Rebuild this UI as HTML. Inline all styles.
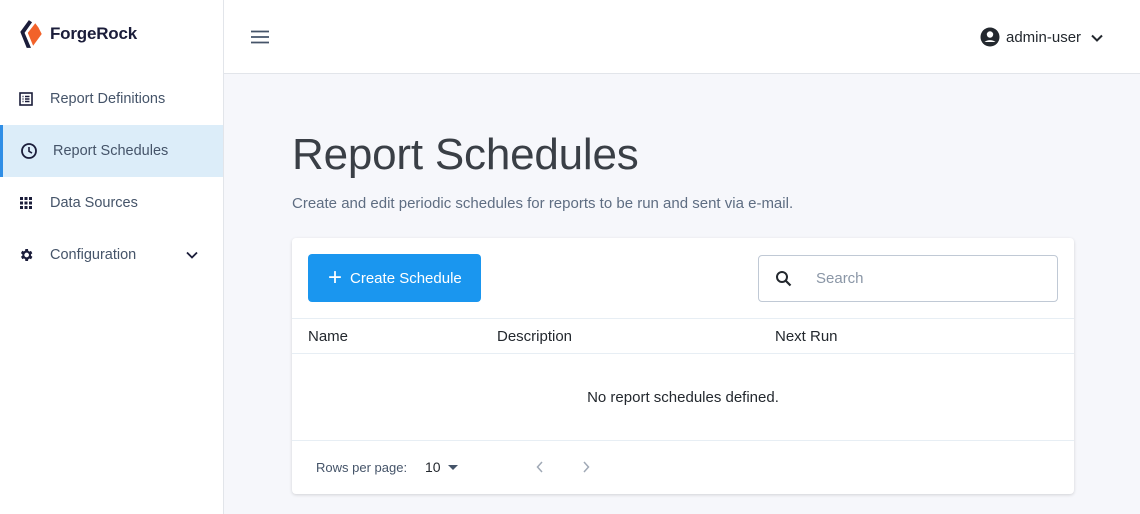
<!DOCTYPE html>
<html><head><meta charset="utf-8"><style>
*{box-sizing:border-box;margin:0;padding:0}
body{width:1140px;height:514px;overflow:hidden;font-family:"Liberation Sans",sans-serif;background:#f6f7fb;position:relative;color:#23282e}
.side{position:absolute;left:0;top:0;width:224px;height:514px;background:#fff;border-right:1px solid #e2e5ea}
.logo{position:absolute;left:18px;top:19px;display:flex;align-items:center}
.logo span{font-weight:bold;font-size:17px;color:#1b1d3a;margin-left:6px;letter-spacing:-0.2px}
.nav{position:absolute;left:0;width:223px;height:52px;display:flex;align-items:center;font-size:14.5px;color:#455469}
.nav svg{position:absolute;left:19px}
.nav .t{position:absolute;left:50px;top:18px}
.active{background:#dcedf9;border-left:3px solid #2f8ee6}
.header{position:absolute;left:224px;top:0;right:0;height:74px;background:#fff;border-bottom:1px solid #e2e5ea}
h1{position:absolute;left:292px;top:130px;font-weight:normal;font-size:44px;color:#3a3f46;letter-spacing:-0.2px}
.sub{position:absolute;left:292px;top:195px;font-size:15px;color:#5e6d82}
.card{position:absolute;left:292px;top:238px;width:782px;height:256px;background:#fff;border-radius:4px;box-shadow:0 1px 3px rgba(0,0,0,.15)}
.btn{position:absolute;left:16px;top:16px;width:173px;height:48px;background:#1a96ef;border-radius:4px;color:#fff;font-size:15px;display:flex;align-items:center;padding-left:20px}
.search{position:absolute;left:466px;top:17px;width:300px;height:47px;border:1px solid #c0c9d5;border-radius:4px;font-size:15px;color:#8a96a6}
.line{position:absolute;left:0;right:0;height:1px;background:#e7eef4}
.th{position:absolute;top:90px;font-size:15px;color:#23282e}
</style></head><body>
<div class="side">
 <div class="logo">
  <svg width="26" height="30" viewBox="0 0 24 28"><path d="M10 1 L2 12 L8 27 L12 27 L6 13 L13 3Z" fill="#1b1d3a"/><path d="M16 4 L9 13 L14 25 L22 14 L19 8Z" fill="#f2622a"/></svg>
  <span>ForgeRock</span>
 </div>
 <div class="nav" style="top:73px"><svg width="14" height="14" viewBox="0 0 14 14"><rect x="1" y="1" width="12" height="12" fill="none" stroke="#1b1d3a" stroke-width="1.6"/><path d="M3.5 4.5h1M6 4.5h4.5M3.5 7h1M6 7h4.5M3.5 9.5h1M6 9.5h4.5" stroke="#1b1d3a" stroke-width="1.4"/></svg><span class="t">Report Definitions</span></div>
 <div class="nav active" style="top:125px"><svg width="18" height="18" viewBox="0 0 18 18" style="left:17px"><circle cx="9" cy="9" r="7" fill="none" stroke="#1b1d3a" stroke-width="1.8"/><path d="M9 5v4.3l3 1.8" fill="none" stroke="#1b1d3a" stroke-width="1.6"/></svg><span class="t">Report Schedules</span></div>
 <div class="nav" style="top:177px"><svg width="14" height="14" viewBox="0 0 14 14" fill="#1b1d3a"><rect x="1" y="1" width="3" height="3"/><rect x="5.5" y="1" width="3" height="3"/><rect x="10" y="1" width="3" height="3"/><rect x="1" y="5.5" width="3" height="3"/><rect x="5.5" y="5.5" width="3" height="3"/><rect x="10" y="5.5" width="3" height="3"/><rect x="1" y="10" width="3" height="3"/><rect x="5.5" y="10" width="3" height="3"/><rect x="10" y="10" width="3" height="3"/></svg><span class="t">Data Sources</span></div>
 <div class="nav" style="top:229px"><svg width="16" height="16" viewBox="0 0 24 24" style="left:18px"><path fill="#1b1d3a" d="M19.4 13a7.5 7.5 0 000-2l2.1-1.6-2-3.5-2.5 1a7.3 7.3 0 00-1.7-1L15 3h-4l-.4 2.7a7.3 7.3 0 00-1.7 1l-2.5-1-2 3.5L6.6 11a7.5 7.5 0 000 2l-2.1 1.6 2 3.5 2.5-1a7.3 7.3 0 001.7 1L11 21h4l.4-2.7a7.3 7.3 0 001.7-1l2.5 1 2-3.5zM13 15.5A3.5 3.5 0 1113 8.5a3.5 3.5 0 010 7z"/></svg><span class="t">Configuration</span><svg width="12" height="8" viewBox="0 0 12 8" style="left:186px"><path d="M1 1.5l5 5 5-5" fill="none" stroke="#1b1d3a" stroke-width="1.8"/></svg></div>
</div>
<div class="header">
 <svg width="20" height="14" viewBox="0 0 20 14" style="position:absolute;left:26px;top:30px"><path d="M1 1.5h18M1 7h18M1 12.5h18" stroke="#455469" stroke-width="1.8"/></svg>
 <svg width="20" height="20" viewBox="0 0 20 20" style="position:absolute;left:756px;top:27px"><circle cx="10" cy="10" r="9.5" fill="#23282e"/><circle cx="10" cy="7.5" r="3.2" fill="#fff"/><path d="M4.5 15a7 5 0 0111 0" fill="#fff"/></svg>
 <span style="position:absolute;left:782px;top:29px;font-size:15px;color:#23282e">admin-user</span>
 <svg width="12" height="8" viewBox="0 0 12 8" style="position:absolute;left:867px;top:34px"><path d="M1 1.5l5 5 5-5" fill="none" stroke="#23282e" stroke-width="2"/></svg>
</div>
<h1>Report Schedules</h1>
<div class="sub">Create and edit periodic schedules for reports to be run and sent via e-mail.</div>
<div class="card">
 <div class="btn"><span style="font-size:24px;font-weight:300;margin-right:8px;line-height:1">+</span>Create Schedule</div>
 <div class="search"><svg width="18" height="18" viewBox="0 0 18 18" style="position:absolute;left:16px;top:14px"><circle cx="7" cy="7" r="5" fill="none" stroke="#23282e" stroke-width="2"/><path d="M10.5 10.5l5 5" stroke="#23282e" stroke-width="2.2"/></svg><span style="position:absolute;left:57px;top:14px">Search</span></div>
 <div class="line" style="top:80px"></div>
 <div class="th" style="left:16px">Name</div>
 <div class="th" style="left:205px">Description</div>
 <div class="th" style="left:483px">Next Run</div>
 <div class="line" style="top:115px"></div>
 <div style="position:absolute;left:0;right:0;top:151px;text-align:center;font-size:15px;color:#23282e">No report schedules defined.</div>
 <div class="line" style="top:202px"></div>
 <div style="position:absolute;left:24px;top:222px;font-size:13px;color:#455469">Rows per page:</div>
 <div style="position:absolute;left:133px;top:221px;font-size:14px;color:#23282e">10</div>
 <svg width="10" height="6" viewBox="0 0 10 6" style="position:absolute;left:156px;top:227px"><path d="M0 0h10L5 5z" fill="#455469"/></svg>
 <svg width="8" height="12" viewBox="0 0 8 12" style="position:absolute;left:244px;top:223px"><path d="M6 1L1.5 6 6 11" fill="none" stroke="#a0a9b6" stroke-width="1.5"/></svg>
 <svg width="8" height="12" viewBox="0 0 8 12" style="position:absolute;left:290px;top:223px"><path d="M2 1l4.5 5L2 11" fill="none" stroke="#a0a9b6" stroke-width="1.5"/></svg>
</div>
</body></html>
